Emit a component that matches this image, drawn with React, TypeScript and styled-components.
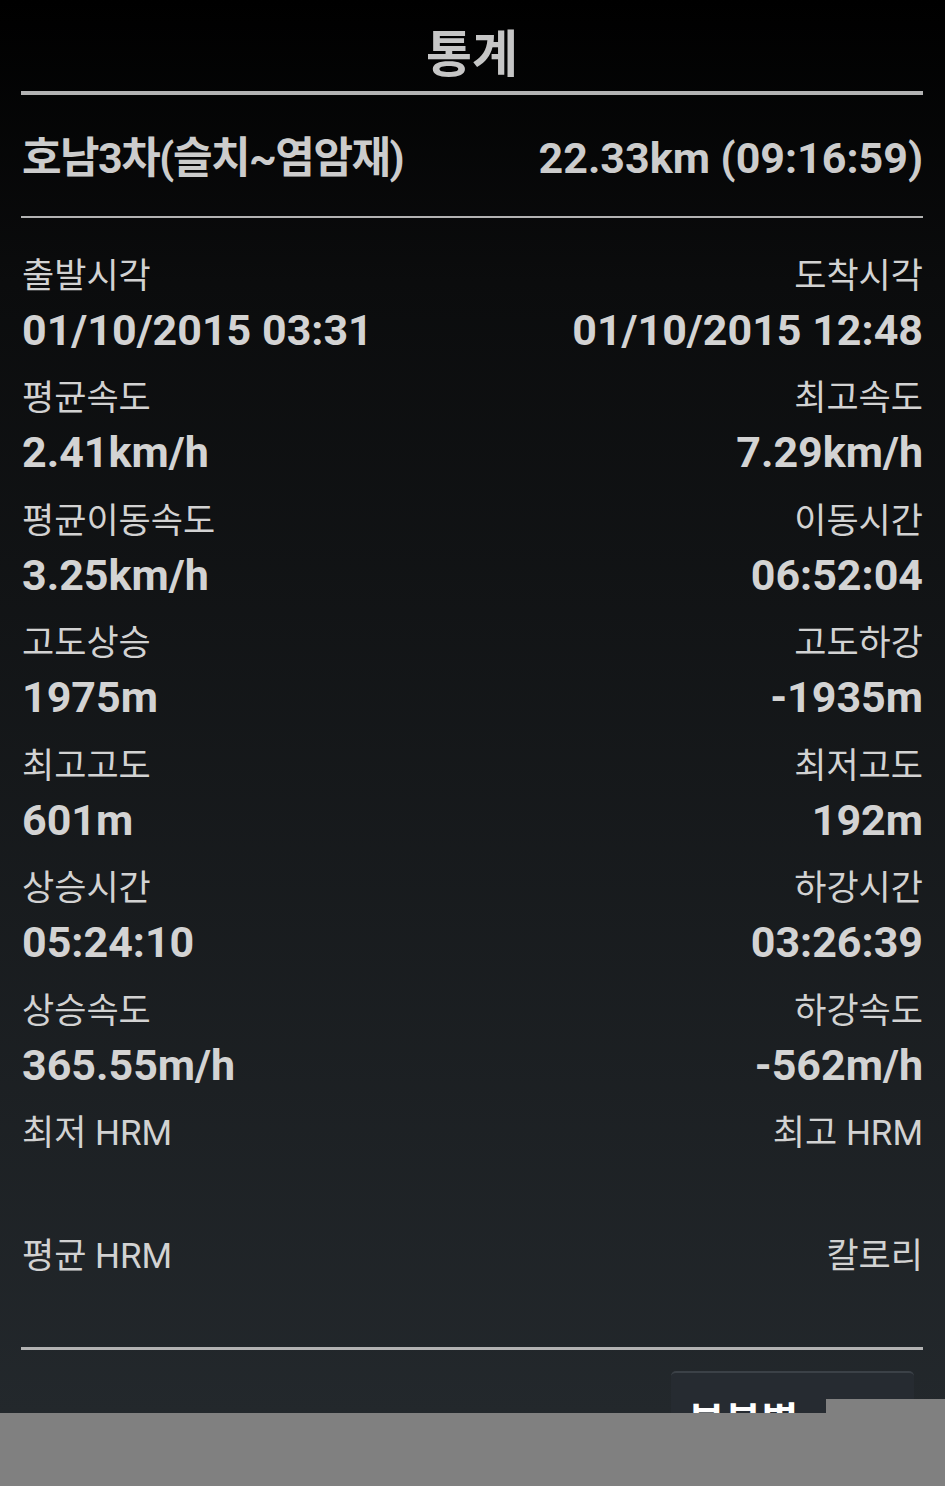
import { createGlobalStyle, styled } from "styled-components";

const GlobalStyle = createGlobalStyle`
  html, body {
    margin: 0;
    padding: 0;
    background: #808080;
  }
  body {
    font-family: Roboto, "Noto Sans CJK KR", sans-serif;
  }
`;

const Page = styled.div`
  width: 945px;
  height: 1486px;
  display: flex;
  flex-direction: column;
  overflow: hidden;
`;

const Screen = styled.div`
  position: relative;
  height: 1413px;
  flex-shrink: 0;
  overflow: hidden;
  padding: 0 22px 0 21px;
  box-sizing: border-box;
  background: linear-gradient(to bottom, #000000 0%, #0b0c0d 20%, #23282c 100%);
  color: #d0d0d0;
`;

const Title = styled.h1`
  margin: 0;
  padding: 25.5px 0 7.5px;
  font-size: 50px;
  line-height: 58px;
  font-weight: 700;
  text-align: center;
  color: #c6c6c6;
`;

const Rule = styled.div<{ $size: number; $gap?: number }>`
  height: ${(p) => p.$size}px;
  margin-top: ${(p) => p.$gap ?? 0}px;
  background: #b3b3b3;
`;

const Summary = styled.div`
  display: flex;
  justify-content: space-between;
  align-items: center;
  margin: 32.5px 0 28.5px;
  height: 60px;
  padding-left: 1px;
  font-size: 43px;
  font-weight: 700;
  line-height: 60px;
  color: #cccccc;
`;

const RouteName = styled.span`
  letter-spacing: -1.5px;
`;

const StatList = styled.div`
  display: flex;
  flex-direction: column;
  gap: 16.5px;
  padding-top: 34.5px;
`;

const StatRow = styled.div`
  display: grid;
  grid-template-columns: 1fr 1fr;
`;

const Cell = styled.div<{ $right?: boolean }>`
  display: flex;
  flex-direction: column;
  align-items: ${(p) => (p.$right ? "flex-end" : "flex-start")};
  padding-left: ${(p) => (p.$right ? 0 : 1)}px;
`;

const Label = styled.span`
  height: 48px;
  font-size: 35px;
  line-height: 48px;
  font-weight: 400;
  color: #d2d2d2;
  white-space: nowrap;
`;

const Value = styled.span`
  height: 58px;
  font-size: 43px;
  line-height: 58px;
  font-weight: 700;
  color: #d3d3d3;
  white-space: nowrap;
`;

const Actions = styled.div`
  display: flex;
  justify-content: flex-end;
  margin-top: 21px;
  padding-right: 9px;
`;

const ActionButton = styled.button`
  width: 243px;
  height: 80px;
  padding: 22px 0 0 17px;
  box-sizing: border-box;
  text-align: left;
  border: 0;
  border-top: 2px solid #3b4147;
  border-radius: 5px 5px 0 0;
  background: #262b31;
  color: #ffffff;
  font-family: Roboto, "Noto Sans CJK KR", sans-serif;
  font-size: 40px;
  font-weight: 700;
  line-height: 50px;
`;

const GrayPatch = styled.div`
  position: absolute;
  left: 826px;
  right: 0;
  bottom: 0;
  height: 14px;
  background: #808080;
`;

const Footer = styled.div`
  flex: 1;
  background: #808080;
`;

type Stat = { label: string; value?: string };

const rows: [Stat, Stat][] = [
  [
    { label: "출발시각", value: "01/10/2015 03:31" },
    { label: "도착시각", value: "01/10/2015 12:48" },
  ],
  [
    { label: "평균속도", value: "2.41km/h" },
    { label: "최고속도", value: "7.29km/h" },
  ],
  [
    { label: "평균이동속도", value: "3.25km/h" },
    { label: "이동시간", value: "06:52:04" },
  ],
  [
    { label: "고도상승", value: "1975m" },
    { label: "고도하강", value: "-1935m" },
  ],
  [
    { label: "최고고도", value: "601m" },
    { label: "최저고도", value: "192m" },
  ],
  [
    { label: "상승시간", value: "05:24:10" },
    { label: "하강시간", value: "03:26:39" },
  ],
  [
    { label: "상승속도", value: "365.55m/h" },
    { label: "하강속도", value: "-562m/h" },
  ],
  [{ label: "최저 HRM" }, { label: "최고 HRM" }],
  [{ label: "평균 HRM" }, { label: "칼로리" }],
];

export default function App() {
  return (
    <Page>
      <GlobalStyle />
      <Screen>
        <Title>통계</Title>
        <Rule $size={4} />
        <Summary>
          <RouteName>호남3차(슬치~염암재)</RouteName>
          <span>22.33km (09:16:59)</span>
        </Summary>
        <Rule $size={2} />
        <StatList>
          {rows.map(([left, right]) => (
            <StatRow key={left.label}>
              <Cell>
                <Label>{left.label}</Label>
                <Value>{left.value ?? ""}</Value>
              </Cell>
              <Cell $right>
                <Label>{right.label}</Label>
                <Value>{right.value ?? ""}</Value>
              </Cell>
            </StatRow>
          ))}
        </StatList>
        <Rule $size={3} $gap={8.5} />
        <Actions>
          <ActionButton>부분별</ActionButton>
        </Actions>
        <GrayPatch />
      </Screen>
      <Footer />
    </Page>
  );
}
